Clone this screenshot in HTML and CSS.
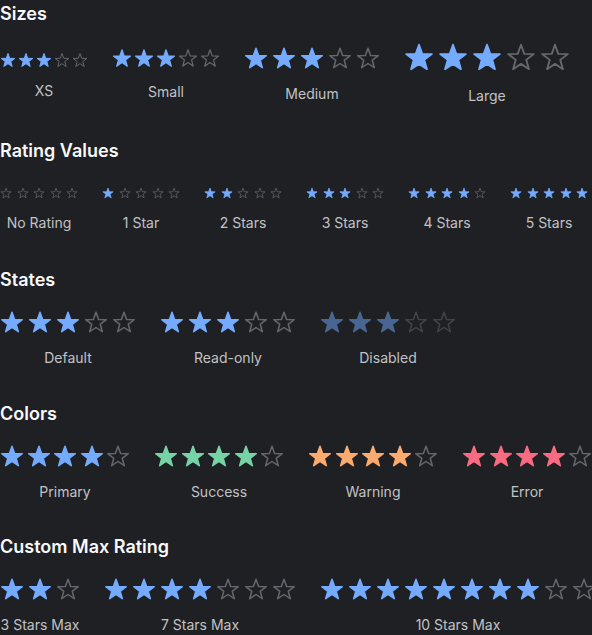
FILE: index.html
```html
<!DOCTYPE html>
<html lang="en">
<head>
<meta charset="utf-8">
<title>Rating</title>
<link rel="stylesheet" href="styles.css">
</head>
<body>
<svg class="defs" aria-hidden="true">
  <symbol id="s" viewBox="0 0 24 24">
    <polygon points="12,2.2 14.6,9.45 22.27,9.66 16.2,14.3 18.35,21.74 12,17.5 5.65,21.74 7.8,14.3 1.73,9.66 9.4,9.45"/>
  </symbol>
</svg>
<div class="page">

  <section class="section">
    <h2 class="title title-tight">Sizes</h2>
    <div class="row">
      <div class="group g-xs">
        <div class="stars xs"><svg class="star on"><use href="#s"/></svg><svg class="star on"><use href="#s"/></svg><svg class="star on"><use href="#s"/></svg><svg class="star off"><use href="#s"/></svg><svg class="star off"><use href="#s"/></svg></div>
        <div class="label">XS</div>
      </div>
      <div class="group g-sm">
        <div class="stars sm"><svg class="star on"><use href="#s"/></svg><svg class="star on"><use href="#s"/></svg><svg class="star on"><use href="#s"/></svg><svg class="star off"><use href="#s"/></svg><svg class="star off"><use href="#s"/></svg></div>
        <div class="label">Small</div>
      </div>
      <div class="group g-md">
        <div class="stars md"><svg class="star on"><use href="#s"/></svg><svg class="star on"><use href="#s"/></svg><svg class="star on"><use href="#s"/></svg><svg class="star off"><use href="#s"/></svg><svg class="star off"><use href="#s"/></svg></div>
        <div class="label">Medium</div>
      </div>
      <div class="group g-lg">
        <div class="stars lg"><svg class="star on"><use href="#s"/></svg><svg class="star on"><use href="#s"/></svg><svg class="star on"><use href="#s"/></svg><svg class="star off"><use href="#s"/></svg><svg class="star off"><use href="#s"/></svg></div>
        <div class="label">Large</div>
      </div>
    </div>
  </section>

  <section class="section">
    <h2 class="title">Rating Values</h2>
    <div class="row">
      <div class="group g-tiny">
        <div class="stars tiny"><svg class="star off"><use href="#s"/></svg><svg class="star off"><use href="#s"/></svg><svg class="star off"><use href="#s"/></svg><svg class="star off"><use href="#s"/></svg><svg class="star off"><use href="#s"/></svg></div>
        <div class="label">No Rating</div>
      </div>
      <div class="group g-tiny">
        <div class="stars tiny"><svg class="star on"><use href="#s"/></svg><svg class="star off"><use href="#s"/></svg><svg class="star off"><use href="#s"/></svg><svg class="star off"><use href="#s"/></svg><svg class="star off"><use href="#s"/></svg></div>
        <div class="label">1 Star</div>
      </div>
      <div class="group g-tiny">
        <div class="stars tiny"><svg class="star on"><use href="#s"/></svg><svg class="star on"><use href="#s"/></svg><svg class="star off"><use href="#s"/></svg><svg class="star off"><use href="#s"/></svg><svg class="star off"><use href="#s"/></svg></div>
        <div class="label">2 Stars</div>
      </div>
      <div class="group g-tiny">
        <div class="stars tiny"><svg class="star on"><use href="#s"/></svg><svg class="star on"><use href="#s"/></svg><svg class="star on"><use href="#s"/></svg><svg class="star off"><use href="#s"/></svg><svg class="star off"><use href="#s"/></svg></div>
        <div class="label">3 Stars</div>
      </div>
      <div class="group g-tiny">
        <div class="stars tiny"><svg class="star on"><use href="#s"/></svg><svg class="star on"><use href="#s"/></svg><svg class="star on"><use href="#s"/></svg><svg class="star on"><use href="#s"/></svg><svg class="star off"><use href="#s"/></svg></div>
        <div class="label">4 Stars</div>
      </div>
      <div class="group g-tiny">
        <div class="stars tiny"><svg class="star on"><use href="#s"/></svg><svg class="star on"><use href="#s"/></svg><svg class="star on"><use href="#s"/></svg><svg class="star on"><use href="#s"/></svg><svg class="star on"><use href="#s"/></svg></div>
        <div class="label">5 Stars</div>
      </div>
    </div>
  </section>

  <section class="section">
    <h2 class="title">States</h2>
    <div class="row">
      <div class="group">
        <div class="stars md"><svg class="star on"><use href="#s"/></svg><svg class="star on"><use href="#s"/></svg><svg class="star on"><use href="#s"/></svg><svg class="star off"><use href="#s"/></svg><svg class="star off"><use href="#s"/></svg></div>
        <div class="label">Default</div>
      </div>
      <div class="group">
        <div class="stars md"><svg class="star on"><use href="#s"/></svg><svg class="star on"><use href="#s"/></svg><svg class="star on"><use href="#s"/></svg><svg class="star off"><use href="#s"/></svg><svg class="star off"><use href="#s"/></svg></div>
        <div class="label">Read-only</div>
      </div>
      <div class="group">
        <div class="stars md disabled"><svg class="star on"><use href="#s"/></svg><svg class="star on"><use href="#s"/></svg><svg class="star on"><use href="#s"/></svg><svg class="star off"><use href="#s"/></svg><svg class="star off"><use href="#s"/></svg></div>
        <div class="label">Disabled</div>
      </div>
    </div>
  </section>

  <section class="section">
    <h2 class="title">Colors</h2>
    <div class="row">
      <div class="group">
        <div class="stars md2 primary"><svg class="star on"><use href="#s"/></svg><svg class="star on"><use href="#s"/></svg><svg class="star on"><use href="#s"/></svg><svg class="star on"><use href="#s"/></svg><svg class="star off"><use href="#s"/></svg></div>
        <div class="label">Primary</div>
      </div>
      <div class="group">
        <div class="stars md2 success"><svg class="star on"><use href="#s"/></svg><svg class="star on"><use href="#s"/></svg><svg class="star on"><use href="#s"/></svg><svg class="star on"><use href="#s"/></svg><svg class="star off"><use href="#s"/></svg></div>
        <div class="label">Success</div>
      </div>
      <div class="group">
        <div class="stars md2 warning"><svg class="star on"><use href="#s"/></svg><svg class="star on"><use href="#s"/></svg><svg class="star on"><use href="#s"/></svg><svg class="star on"><use href="#s"/></svg><svg class="star off"><use href="#s"/></svg></div>
        <div class="label">Warning</div>
      </div>
      <div class="group">
        <div class="stars md2 error"><svg class="star on"><use href="#s"/></svg><svg class="star on"><use href="#s"/></svg><svg class="star on"><use href="#s"/></svg><svg class="star on"><use href="#s"/></svg><svg class="star off"><use href="#s"/></svg></div>
        <div class="label">Error</div>
      </div>
    </div>
  </section>

  <section class="section">
    <h2 class="title">Custom Max Rating</h2>
    <div class="row">
      <div class="group">
        <div class="stars md"><svg class="star on"><use href="#s"/></svg><svg class="star on"><use href="#s"/></svg><svg class="star off"><use href="#s"/></svg></div>
        <div class="label">3 Stars Max</div>
      </div>
      <div class="group">
        <div class="stars md"><svg class="star on"><use href="#s"/></svg><svg class="star on"><use href="#s"/></svg><svg class="star on"><use href="#s"/></svg><svg class="star on"><use href="#s"/></svg><svg class="star off"><use href="#s"/></svg><svg class="star off"><use href="#s"/></svg><svg class="star off"><use href="#s"/></svg></div>
        <div class="label">7 Stars Max</div>
      </div>
      <div class="group">
        <div class="stars md"><svg class="star on"><use href="#s"/></svg><svg class="star on"><use href="#s"/></svg><svg class="star on"><use href="#s"/></svg><svg class="star on"><use href="#s"/></svg><svg class="star on"><use href="#s"/></svg><svg class="star on"><use href="#s"/></svg><svg class="star on"><use href="#s"/></svg><svg class="star on"><use href="#s"/></svg><svg class="star off"><use href="#s"/></svg><svg class="star off"><use href="#s"/></svg></div>
        <div class="label">10 Stars Max</div>
      </div>
    </div>
  </section>

</div>
</body>
</html>
```

FILE: styles.css
```css
html, body {
  margin: 0;
  padding: 0;
  background: #1f2024;
  overflow: hidden;
}

body {
  font-family: Inter, "Noto Sans", "Liberation Sans", sans-serif;
  color: #c1c2c5;
}

.defs {
  display: block;
  width: 0;
  height: 0;
  overflow: hidden;
}

.page {
  width: 592px;
  height: 635px;
  overflow: hidden;
}

.section {
  margin: 0;
}

.section:nth-child(1) { height: 137px; }
.section:nth-child(2) { height: 128.5px; }
.section:nth-child(3) { height: 134px; }
.section:nth-child(4) { height: 133.5px; }

.title {
  margin: 0 0 16px;
  height: 28px;
  font-size: 18px;
  line-height: 28px;
  font-weight: 600;
  color: #f8f9fa;
}

.title-tight {
  margin-bottom: 12px;
}

.row {
  display: flex;
  flex-wrap: nowrap;
  gap: 24px;
  align-items: flex-start;
}

.group {
  display: flex;
  flex-direction: column;
  align-items: center;
  flex: none;
}

.label {
  margin-top: 14px;
  font-size: 14px;
  line-height: 20px;
  color: #c1c2c5;
  white-space: nowrap;
}

.stars {
  display: flex;
  --c: #74abff;
}

.star {
  display: block;
  flex: none;
  stroke-width: 1.5;
  stroke-linejoin: round;
  overflow: visible;
}

.star.on {
  fill: var(--c);
  stroke: var(--c);
}

.star.off {
  fill: none;
  stroke: #66676c;
}

/* size variants */
.tiny { gap: 4.5px; }
.tiny .star { width: 12px; height: 12px; }

.xs { gap: 2px; }
.xs .star { width: 16px; height: 16px; }

.sm { gap: 2px; }
.sm .star { width: 20px; height: 20px; }

.md { gap: 4px; }
.md .star { width: 24px; height: 24px; }

.md2 { gap: 2.5px; }
.md2 .star { width: 24px; height: 24px; }

.lg { gap: 4px; }
.lg .star { width: 30px; height: 30px; }

/* vertical placement within the Sizes row */
.g-xs .stars { margin-top: 11.5px; }
.g-xs .label { margin-top: 13.5px; }

.g-sm .stars { margin-top: 8px; }
.g-sm .label { margin-top: 13.5px; }

.g-md .stars { margin-top: 5.5px; }
.g-md .label { margin-top: 14.5px; }

.g-lg .stars { margin-top: 1.5px; }
.g-lg .label { margin-top: 14.5px; }

.g-tiny .stars { margin-top: 6px; }

.disabled { opacity: 0.5; }

.primary { --c: #74abff; }
.success { --c: #76d3a5; }
.warning { --c: #fcab6f; }
.error { --c: #f86b80; }
```
